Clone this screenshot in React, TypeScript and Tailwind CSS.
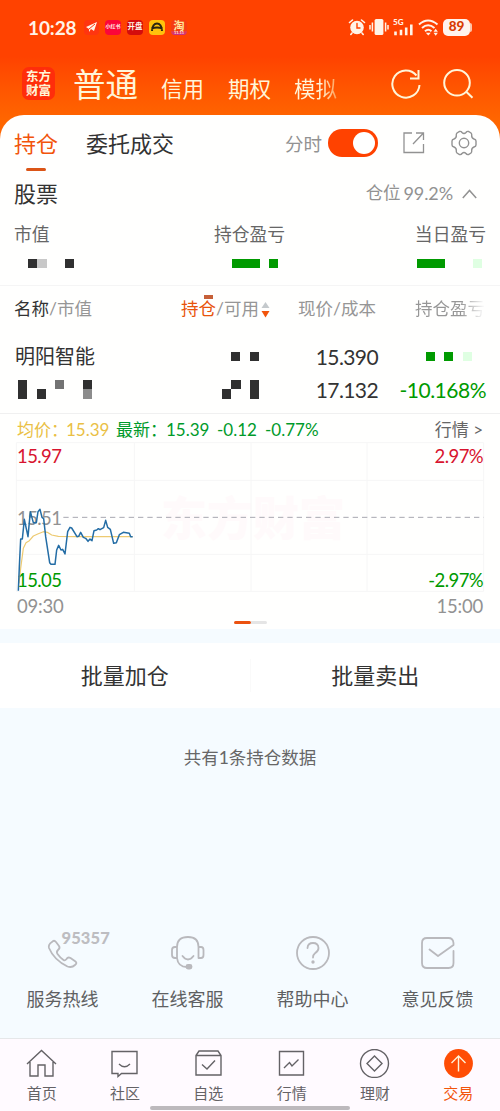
import type { ReactNode } from 'react';

const CELL_COLORS: Record<string, string> = {
  k: 'bg-[#303030]',
  g: 'bg-[#c8c8c8]',
  m: 'bg-[#737373]',
  n: 'bg-[#8c8c8c]',
  G: 'bg-[#009a00]',
  l: 'bg-[#dfffe2]',
  ' ': 'bg-transparent',
};

// Hidden amounts: every character is one cell of the pixel mask
function Mosaic({ rows }: { rows: string[] }) {
  return (
    <div>
      {rows.map((row, i) => (
        <div key={i} className="flex">
          {row.split('').map((c, j) => (
            <span key={j} className={`block w-[9.25px] h-[9.25px] ${CELL_COLORS[c]}`} />
          ))}
        </div>
      ))}
    </div>
  );
}

function StatusBar() {
  return (
    <div className="h-[54px] pl-[28px] pr-[28px] flex items-center text-[#fff3e8]">
      <span className="w-[56px] text-[19px] leading-none font-bold tracking-[-0.1px]">10:28</span>
      <div className="flex gap-[6px]">
        <span className="w-[15px] h-[15px] rounded-[4px] bg-[#ff3510] flex items-center justify-center">
          <svg width="13" height="13" viewBox="0 0 13 13" fill="currentColor">
            <path d="M1 6 12 1 9 10 6 8 4 11 4 8z" />
            <path d="M4 8 10 3" stroke="#ff3510" strokeWidth="1" />
          </svg>
        </span>
        <span className="w-[16px] h-[15px] rounded-[4px] bg-[#fb063a] flex items-center justify-center text-[5px] font-bold whitespace-nowrap">小红书</span>
        <span className="w-[16px] h-[15px] rounded-[4px] bg-[#d40c0d] flex items-center justify-center text-[7.5px] font-bold whitespace-nowrap">开盘</span>
        <span className="w-[16px] h-[15px] rounded-[4px] bg-[#ffc20c] flex items-center justify-center">
          <svg width="14" height="12" viewBox="0 0 14 12" fill="none" stroke="#2b2411" strokeWidth="2">
            <path d="M2 10C2 0 12 0 12 10M1.5 7.5Q7 5.5 12.5 7.5" />
          </svg>
        </span>
        <span className="w-[16px] h-[15px] rounded-[4px] overflow-hidden bg-gradient-to-b from-[#f43c13] from-70% to-[#c52a8c] flex flex-col items-center">
          <span className="text-[11px] leading-[11px] font-bold text-[#ffe9a0]">淘</span>
          <span className="text-[4px] leading-[4px] font-bold">11.11</span>
        </span>
      </div>
      <div className="ml-auto flex items-center">
        <svg width="18" height="18" viewBox="0 0 18 18" fill="none" stroke="currentColor" strokeLinecap="round">
          <circle cx="9" cy="9.5" r="6.8" fill="currentColor" stroke="none" />
          <path d="M1.5 4.5 4.5 2M13.5 2 16.5 4.5M4 15 2.8 16.5M14 15 15.2 16.5" strokeWidth="1.6" />
          <path d="M9 5.5V10H12" stroke="#ff4200" strokeWidth="1.4" />
        </svg>
        <svg className="ml-[3px]" width="20" height="18" viewBox="0 0 20 18" fill="none" stroke="currentColor" strokeWidth="1.5">
          <rect x="5.6" y="1" width="8.8" height="16" rx="1.6" fill="currentColor" stroke="none" />
          <path d="M3.4 4.5v9M1 7v4.5M16.6 4.5v9M19 7v4.5" />
        </svg>
        <svg className="ml-[4px]" width="20" height="18" viewBox="0 0 20 18" fill="none" stroke="currentColor">
          <text x="0" y="7" fontSize="8" fontWeight="900" fill="currentColor" stroke="none">5G</text>
          <path d="M2.5 17.2v-3.7M8 17.2v-5.4M13.2 17.2V9.5M18.3 17.2V6.5" strokeWidth="2.6" />
        </svg>
        <svg className="ml-[5px]" width="21" height="18" viewBox="0 0 21 18" fill="none" stroke="currentColor" strokeWidth="2">
          <path d="M1 6.5Q10 -1.5 19.5 6.5M4 10Q10 4.5 16.5 10M7 13.2Q10.2 10.2 13.5 13.2" />
          <path d="M7.8 14.8h5L10.3 17.5zM15.5 13.8l2.2-3 2.2 3zM15.5 14.8l2.2 3 2.2-3z" fill="currentColor" stroke="none" />
        </svg>
        <span className="ml-[4px] w-[27px] h-[17px] rounded-[5px] bg-[#fff3ee] text-[#d83a00] text-[13.5px] leading-none font-black flex items-center justify-center">89</span>
        <span className="w-[2px] h-[9px] rounded-r bg-[#ffc4a8]" />
      </div>
    </div>
  );
}

function Header() {
  return (
    <header className="h-[142px] shrink-0 bg-gradient-to-b from-[#ff4200] from-40% to-[#ff6600] to-85% text-[#fff5d8]">
      <StatusBar />
      <div className="h-[61px] pl-[22px] pr-[26px] flex">
        <div className="mt-[13px] w-[33px] h-[33px] rounded-[7px] bg-[#ff2d0b] flex flex-col items-center justify-center text-[12.5px] leading-[14px] font-bold">
          <span>东方</span>
          <span>财富</span>
        </div>
        <span className="ml-[18px] mt-[11px] w-[88px] text-[32.5px] leading-[40px]">普通</span>
        <span className="mt-[20px] w-[67px] text-[21.5px] leading-[30px]">信用</span>
        <span className="mt-[20px] w-[66px] text-[21.5px] leading-[30px]">期权</span>
        <span className="mt-[20px] w-[44px] text-[21.5px] leading-[30px] bg-gradient-to-r from-[#fff5d8] from-60% to-[#ff9a4a] bg-clip-text text-transparent">模拟</span>
        <svg className="ml-auto mt-[14px]" width="32" height="32" viewBox="0 0 32 32" fill="none" stroke="currentColor" strokeWidth="2">
          <path d="M26.5 7.5A13.6 13.6 0 1 0 29.5 17" />
          <path d="M28.5 2V10.5H20" />
        </svg>
        <svg className="ml-[20px] mt-[14px]" width="32" height="32" viewBox="0 0 32 32" fill="none" stroke="currentColor" strokeWidth="2">
          <circle cx="15" cy="14.8" r="12.8" />
          <path d="M24 23.5 30.5 29.8" />
        </svg>
      </div>
    </header>
  );
}

function Tabs() {
  return (
    <div className="h-[57px] px-[14px] flex">
      <div className="w-[72px] flex flex-col">
        <span className="mt-[13px] text-[22px] leading-[32px] text-[#f2540b]">持仓</span>
        <span className="ml-[12px] mt-[8px] w-[20px] h-[3px] rounded-full bg-[#db5517]" />
      </div>
      <span className="mt-[13px] text-[22px] leading-[32px]">委托成交</span>
      <span className="ml-auto mt-[13px] text-[18.5px] leading-[32px] text-[#929292]">分时</span>
      <div className="ml-[6px] mt-[14px] w-[50px] h-[28px] rounded-full bg-[#ff4200] flex items-center justify-end pr-[3px]">
        <span className="w-[22px] h-[22px] rounded-full bg-white" />
      </div>
      <svg className="ml-[25px] mt-[17px]" width="22" height="22" viewBox="0 0 22 22" fill="none" stroke="#929292" strokeWidth="1.3">
        <path d="M9 1H1V20.5H20.5V12M13 1H20.5V8M20.5 1 10 12" />
      </svg>
      <svg className="ml-[26px] mr-[9px] mt-[15px]" width="26" height="26" viewBox="0 0 26 26" fill="none" stroke="#929292" strokeWidth="1.4">
        <path d="M8.5 1.5Q10 1 11 2.5Q13 4.5 15 2.5Q16 1 17.5 1.5L20 3Q21 4 20.7 5.5Q20.5 8 23 9Q25 9.5 25 11V15Q25 16.5 23 17Q20.5 18 20.7 20.5Q21 22 20 23L17.5 24.5Q16 25 15 23.5Q13 21.5 11 23.5Q10 25 8.5 24.5L6 23Q5 22 5.3 20.5Q5.5 18 3 17Q1 16.5 1 15V11Q1 9.5 3 9Q5.5 8 5.3 5.5Q5 4 6 3Z" />
        <circle cx="13" cy="13" r="4.7" />
      </svg>
    </div>
  );
}

function Summary() {
  return (
    <section>
      <div className="h-[43px] px-[14px] flex items-center justify-between">
        <span className="text-[22px]">股票</span>
        <span className="pr-[9px] flex items-center text-[17.5px] text-[#929292] tracking-[-0.1px]">
          仓位<span className="ml-[3px] text-[18px]">99.2%</span>
          <svg className="ml-[9px]" width="15" height="10" viewBox="0 0 15 10" fill="none" stroke="currentColor" strokeWidth="1.5">
            <path d="M.8 9 7.5 1.5 14.2 9" />
          </svg>
        </span>
      </div>
      <div className="h-[44px] pb-[6px] px-[14px] flex items-center text-[17.8px] text-[#666]">
        <span className="w-[200px]">市值</span>
        <span>持仓盈亏</span>
        <span className="ml-auto">当日盈亏</span>
      </div>
      <div className="h-[26px] pl-[28px] flex">
        <div className="w-[204px]"><Mosaic rows={['kg  k']} /></div>
        <div className="w-[185px]"><Mosaic rows={['GGG G']} /></div>
        <Mosaic rows={['GGG   l']} />
      </div>
    </section>
  );
}

function Holdings() {
  return (
    <section>
      <div className="h-[46px] pt-[1px] pl-[14px] pr-[15px] border-t border-[#f5f5f5] flex items-center text-[17.5px] text-[#969696] whitespace-nowrap">
        <span className="w-[167px]"><span className="text-[#333]">名称</span>/市值</span>
        <span className="relative w-[79px]">
          <span className="text-[#e8540b]">持仓</span>/可用
          <span className="absolute left-[23px] top-[-1px] w-[9px] h-[4px] bg-[#c66038]" />
        </span>
        <svg className="ml-[1px]" width="9" height="17" viewBox="0 0 9 17">
          <path d="M4.5 1 8.5 7H.5z" fill="#c4c9cc" />
          <path d="M.5 10h8l-4 6.5z" fill="#f2540b" />
        </svg>
        <span className="ml-[28px]">现价/成本</span>
        <span className="ml-auto bg-gradient-to-r from-[#969696] from-65% to-white to-100% bg-clip-text text-transparent">持仓盈亏</span>
      </div>
      <div className="pt-[9px] h-[82px] pl-[15px] pr-[14px] flex">
        <div className="w-[207px]">
          <div className="h-[33px] leading-[33px] text-[20px]">明阳智能</div>
          <div className="pt-[7px] pl-[3px]"><Mosaic rows={['k   m  k', 'k k    n']} /></div>
        </div>
        <div className="w-[70px]">
          <div className="h-[40px] pt-[12px] pl-[9px]"><Mosaic rows={['k k']} /></div>
          <Mosaic rows={[' k k', 'k  k']} />
        </div>
        <div className="w-[86px] text-right text-[21px] leading-[33px] tracking-[-0.6px]">
          <div>15.390</div>
          <div>17.132</div>
        </div>
        <div className="ml-auto text-[21px] leading-[33px] tracking-[-0.5px] text-[#009a00]">
          <div className="h-[33px] pt-[12px] pl-[26px]"><Mosaic rows={['G G l']} /></div>
          <div className="text-right">-10.168%</div>
        </div>
      </div>
    </section>
  );
}

function Chart() {
  return (
    <section className="border-t border-[#f0f0f0]">
      <div className="h-[26px] pt-[5px] pl-[17px] pr-[17px] flex items-center text-[17px] whitespace-pre text-[#009a2a]">
        <span className="w-[99px] text-[#eabf45]">均价：<span className="ml-[-2px]">15.39</span></span>
        <span className="w-[101px]">最新：<span className="ml-[-1px]">15.39</span></span>
        <span className="w-[48px]">-0.12</span>
        <span>-0.77%</span>
        <span className="ml-auto text-[17px] text-[#666]">行情 &gt;</span>
      </div>
      <div className="relative h-[152px] text-[18.5px] leading-[20px] tracking-[-0.6px]">
        <span className="absolute left-[161px] top-[50px] text-[46px] leading-[56px] tracking-[0px] font-black text-[#fffafb]">东方财富</span>
        <svg className="absolute inset-0" width="500" height="152" viewBox="0 0 1500 456" fill="none">
          <path d="M49 8H1451V454H49ZM49 121H1451M49 343H1451M403 8V454M753 8V454M1101 8V454" stroke="#f6f6f6" strokeWidth="3" />
          <path d="M190 232H1451" stroke="#a8a8b0" strokeWidth="3" strokeDasharray="16 12" />
        </svg>
        <span className="absolute left-[17px] top-[6px] text-[#d8142f]">15.97</span>
        <span className="absolute right-[17px] top-[6px] text-[#d8142f]">2.97%</span>
        <span className="absolute left-[17px] top-[68px] text-[#929292]">15.51</span>
        <span className="absolute left-[17px] top-[130px] text-[#009a00]">15.05</span>
        <span className="absolute right-[17px] top-[130px] text-[#009a00]">-2.97%</span>
        <svg className="absolute inset-0" width="500" height="152" viewBox="0 0 1500 456" fill="none" strokeLinejoin="round">
          <path d="M57 430 62 385 70 325 78 308 88 302 100 288 115 281 130 275 142 277 155 285 175 289 230 290H398" stroke="#edca71" strokeWidth="3.5" />
          <path d="M55 452 58 380 62 297H67L73 238 84 290 91 215 100 248H109L114 215 120 208 126 232 131 236 137 290 149 368 153 373H165L170 330 176 316 183 330 188 328 195 342 203 275 210 262 215 264 231 290 236 289 242 277 250 292 257 295 264 304 270 297 276 302 282 272 290 270 295 266 300 269 311 263 317 241 323 262 331 268 341 310 349 308 358 284 370 277 388 280 392 290H398" stroke="#246da5" strokeWidth="4.5" />
        </svg>
      </div>
      <div className="h-[29px] px-[17px] flex items-center justify-between text-[18.5px] tracking-[-0.2px] text-[#929292]">
        <span>09:30</span>
        <span>15:00</span>
      </div>
      <div className="h-[8px] flex justify-center">
        <span className="w-[17px] h-[3px] rounded-full bg-[#eb5210]" />
        <span className="w-[16px] h-[3px] rounded-r-full bg-[#e5e5e5]" />
      </div>
    </section>
  );
}

function Service({ label, children }: { label: string; children: ReactNode }) {
  return (
    <div className="flex flex-col items-center">
      <div className="relative h-[36px]">
        {children}
      </div>
      <span className="mt-[14px] text-[18px] leading-[28px] text-[#5e6062]">{label}</span>
    </div>
  );
}

function Services() {
  const props = { width: 36, height: 36, viewBox: '0 0 36 36', fill: 'none', stroke: '#b9b9bd', strokeWidth: 1.8, strokeLinejoin: 'round' as const, strokeLinecap: 'round' as const };
  return (
    <div className="mt-auto h-[103px] grid grid-cols-4">
      <Service label="服务热线">
        <svg {...props}>
          <path d="M7 7 Q9 4.5 11 7L14 11Q15.5 13 13 15Q11 17 12.5 19Q15 22.5 18.5 25Q20 26 21.5 24Q23 21.5 25.5 23L30.5 26.5Q32.5 28 30 30Q27 33 22.5 31.5Q9 25 4 13Q3 9.5 7 7Z" />
        </svg>
        <span className="absolute left-[17px] top-[-8px] text-[16.5px] leading-[22px] tracking-[0.1px] font-black text-[#bdbdc1]">95357</span>
      </Service>
      <Service label="在线客服">
        <svg {...props}>
          <path d="M7 12V23H5Q2 23 2 20V15Q2 12 5 12H7Q7 2 18 2Q28.5 2 28.5 12V23H31Q33.5 23 33.5 20V15Q33.5 12 31 12H28.5M7 23Q8 32 17 32" />
          <path d="M12.5 21Q18 28 23.5 21" />
          <rect x="16.5" y="30" width="5" height="3.5" rx="1.5" fill="#b9b9bd" />
        </svg>
      </Service>
      <Service label="帮助中心">
        <svg {...props}>
          <circle cx="18" cy="18" r="16" />
          <path d="M12.5 13Q12.8 8 18 8T23.5 13Q23.5 16 20 18.2Q18 19.8 18 22.5" />
          <circle cx="18" cy="27" r=".8" fill="#b9b9bd" />
        </svg>
      </Service>
      <Service label="意见反馈">
        <svg {...props}>
          <path d="M33.5 16V28Q33.5 33 28.5 33H7Q2 33 2 28V8Q2 3 7 3H28.5Q33 3 33.5 8V10L18 21 9.5 14.5" />
        </svg>
      </Service>
    </div>
  );
}

const NAV_ITEMS = [
  { label: '首页', icon: <path d="M1 15 15.5 1.5 30 15M4 13V27H12V16H19V27H27V13" /> },
  { label: '社区', icon: <><path d="M3 2.5H28V24.5H12.5L9 27.5V24.5H3Z" /><path d="M10 15Q15.5 20.5 21 15" /></> },
  { label: '自选', icon: <path d="M3 6.5 6 2H25L28 6.5V26H3ZM3 6.5H28M9 15.5 14 20 22 11.5" /> },
  { label: '行情', icon: <><path d="M3.5 2.5H27.5V26H3.5Z" /><path d="M8 19 13.5 13.5 16 17 22.5 10.5" /></> },
  { label: '理财', icon: <><circle cx="15.5" cy="14.5" r="14" /><path d="M15.5 7 23 14.5 15.5 22 8 14.5Z" /></> },
  { label: '交易', icon: <><circle cx="15.5" cy="14.5" r="14.4" fill="#ff4d05" stroke="none" /><path d="M15.5 22.5V7M8.5 14 15.5 7 22.5 14" stroke="#fff3d8" /></> },
];

function BottomNav() {
  return (
    <nav className="relative h-[73px] pt-[10px] bg-[#fffaff] border-t border-[#e5e7e9] grid grid-cols-6">
      {NAV_ITEMS.map((item) => (
        <div key={item.label} className={`flex flex-col items-center ${item.label === '交易' ? 'text-[#f2540b]' : 'text-[#646266]'}`}>
          <svg width="31" height="29" viewBox="0 0 31 29" fill="none" stroke="currentColor" strokeWidth="1.4">{item.icon}</svg>
          <span className="mt-[5px] text-[15px] leading-[20px]">{item.label}</span>
        </div>
      ))}
      <span className="absolute left-[150px] bottom-[1px] w-[200px] h-[4px] rounded-full bg-[#bdb9bd]" />
    </nav>
  );
}

export default function App() {
  return (
    <div className="w-[500px] h-[1111px] overflow-hidden flex flex-col bg-[#f5fbff] text-[#333] font-['Lato','Noto_Sans_CJK_SC',sans-serif]">
      <Header />
      <main className="mt-[-27px] h-[514px] shrink-0 rounded-t-[24px] bg-[#fffffe]">
        <Tabs />
        <Summary />
        <Holdings />
        <Chart />
      </main>
      <div className="mt-[14px] h-[65px] shrink-0 bg-white flex items-center text-[22px]">
        <span className="flex-1 text-center border-r border-[#fafafa]">批量加仓</span>
        <span className="flex-1 text-center">批量卖出</span>
      </div>
      <p className="mt-[36px] text-center text-[17.5px] leading-[28px] text-[#666]">共有1条持仓数据</p>
      <Services />
      <BottomNav />
    </div>
  );
}
